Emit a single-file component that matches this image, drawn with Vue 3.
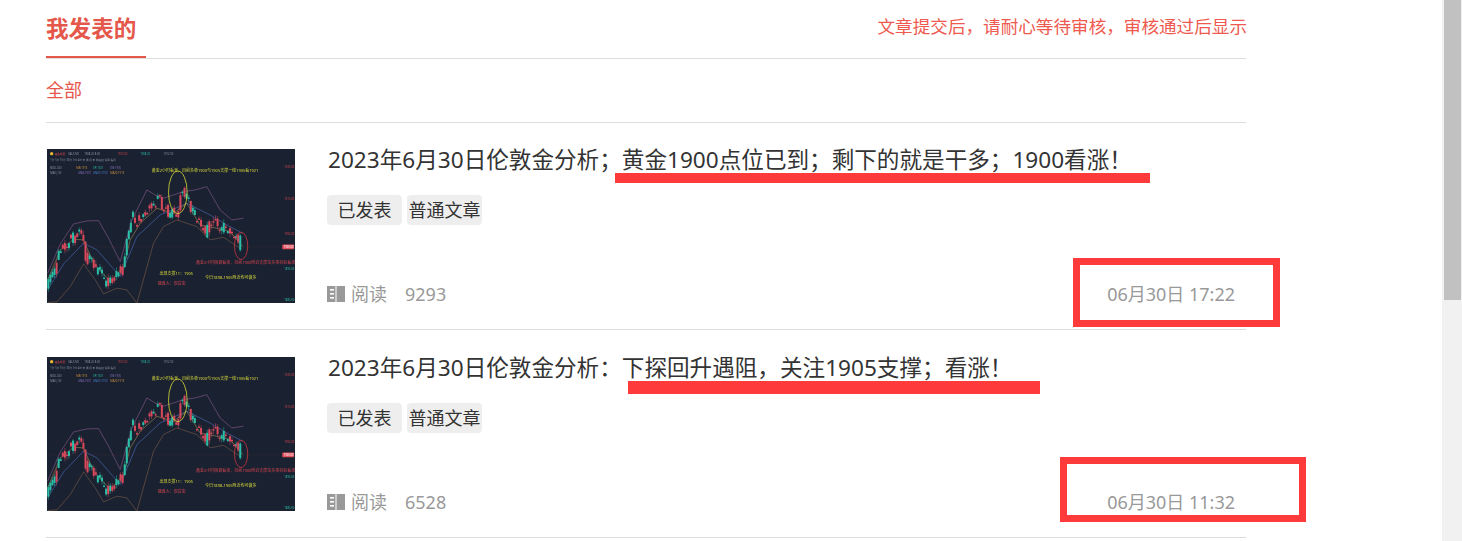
<script setup>
const articles = [
  { id: 1, title: '2023年6月30日伦敦金分析；黄金1900点位已到；剩下的就是干多；1900看涨！', reads: 9293, date: '06月30日 17:22' },
  { id: 2, title: '2023年6月30日伦敦金分析：下探回升遇阻，关注1905支撑；看涨！', reads: 6528, date: '06月30日 11:32' }
]

const pricePath = [[22,430],[40,395],[65,315],[90,300],[128,275],[136,360],[160,378],[190,415],[208,432],[225,395],[245,400],[258,320],[275,232],[300,250],[325,200],[355,175],[375,210],[410,225],[425,150],[445,185],[470,240],[495,275],[515,245],[540,260],[570,268],[605,322]]
const interp = (x) => {
  for (let i = 1; i < pricePath.length; i++) {
    const [x0, y0] = pricePath[i - 1]
    const [x1, y1] = pricePath[i]
    if (x <= x1) return y0 + ((y1 - y0) * (x - x0)) / (x1 - x0)
  }
  return pricePath[pricePath.length - 1][1]
}
let seed = 91
const rnd = () => {
  seed = (seed * 1103 + 12345) % 65536
  return seed / 65536
}
const candles = []
for (let x = 24; x <= 606; x += 6.2) {
  const a = interp(x - 6.2) + (rnd() - 0.5) * 38
  const b = interp(x) + (rnd() - 0.5) * 38
  const top = Math.min(a, b)
  const h = Math.max(Math.abs(a - b), 4)
  const up = rnd() < 0.62
  candles.push({ x, top, h, color: up ? '#d9495c' : '#2bbfa8', wickTop: top - rnd() * 12, wickBottom: top + h + rnd() * 12 })
}
const upper = '22,400 60,312 100,252 140,243 175,242 205,295 240,365 258,300 275,240 320,150 345,165 370,175 430,155 465,150 500,140 540,210 575,240 610,235'
const middle = '22,450 70,372 130,310 170,330 240,410 290,290 360,225 440,190 510,225 560,255 608,280'
const lower = '22,488 50,486 90,440 130,372 165,420 190,462 230,445 260,450 290,490 340,310 370,260 410,240 470,260 510,300 550,292 600,325'
const fast = '22,420 60,330 100,298 130,300 160,370 210,425 250,380 270,300 300,250 350,205 400,220 440,190 480,255 530,265 570,275 608,320'
</script>

<template>
  <div class="page">
    <main class="content">
      <header class="head">
        <h2 class="tab">我发表的</h2>
        <p class="notice">文章提交后，请耐心等待审核，审核通过后显示</p>
      </header>
      <div class="filter">全部</div>
      <article v-for="item in articles" :key="item.id" class="item">
        <svg class="thumb" viewBox="20 27 745 463" preserveAspectRatio="none">
          <rect x="20" y="27" width="745" height="463" fill="#1a2231" />
          <circle cx="34" cy="41" r="5" fill="#f1b92e" />
          <text x="43" y="44" class="tiny hot">黄金现货</text>
          <text x="84" y="44" class="tiny dim">XAUUSD</text>
          <text x="132" y="44" class="tiny dim">1908.20 8.30</text>
          <text x="232" y="44" class="tiny hot">1912.50</text>
          <text x="300" y="44" class="tiny teal">1908.20</text>
          <text x="370" y="44" class="tiny dim">1912.50</text>
          <text x="30" y="64" class="tiny dim">1分 5分 15分 30分 1时 4时 日 周 月 年 前复权 设置 指标</text>
          <text x="30" y="86" class="tiny dim">BOLL(20)</text>
          <text x="108" y="86" class="tiny org">MB:1913</text>
          <text x="158" y="86" class="tiny teal">UP:1921</text>
          <text x="210" y="86" class="tiny pur">DN:1905</text>
          <text x="30" y="102" class="tiny dim">MA(5,10)</text>
          <text x="115" y="102" class="tiny pur">MA5:1907</text>
          <text x="160" y="102" class="tiny blu">MA10:1910</text>
          <text x="210" y="102" class="tiny org">MA20:1913</text>
          <text x="733" y="84" class="tiny red">1925.00</text>
          <text x="733" y="181" class="tiny red">1915.00</text>
          <text x="733" y="286" class="tiny red">1905.00</text>
          <rect x="727" y="314" width="35" height="14" rx="2" fill="#e2505e" />
          <text x="731" y="325" class="tiny white">1900.00</text>
          <text x="733" y="389" class="tiny teal">1895.00</text>
          <text x="733" y="484" class="tiny teal">1885.00</text>
          <line x1="22" y1="321" x2="725" y2="321" stroke="#6b2f3c" stroke-width="1" stroke-dasharray="3 3" />
          <polyline :points="upper" class="band" stroke="#8a5a92" />
          <polyline :points="lower" class="band" stroke="#7a5a48" />
          <polyline :points="middle" class="band" stroke="#4b6fc0" stroke-width="2" />
          <polyline :points="fast" class="band" stroke="#9a8a50" />
          <g v-for="c in candles" :key="c.x">
            <line :x1="c.x" :x2="c.x" :y1="c.wickTop" :y2="c.wickBottom" :stroke="c.color" stroke-width="1.4" />
            <rect :x="c.x - 3" :y="c.top" width="6" :height="c.h" :fill="c.color" />
          </g>
          <ellipse cx="413" cy="157" rx="28" ry="64" class="ring" stroke="#d8d83a" />
          <ellipse cx="603" cy="318" rx="20" ry="41" class="ring" stroke="#c8353f" />
          <text x="335" y="95" class="note yel">黄金2小时看涨，目前多单1900与1905支撑一线1905看1921</text>
          <text x="468" y="372" class="note red">黄金2小时回调看涨，目前1900附近支撑位多单目标看涨</text>
          <text x="358" y="404" class="note yel">出现支撑11：1905</text>
          <text x="495" y="417" class="note yel">今日1898-1905附近均可做多</text>
          <text x="353" y="434" class="note red">操盘人：现货金</text>
        </svg>
        <div class="body">
          <h3 class="title">{{ item.title }}</h3>
          <div class="tags">
            <span class="tag">已发表</span>
            <span class="tag">普通文章</span>
          </div>
          <div class="meta">
            <span class="reads">
              <svg class="book" viewBox="0 0 18 16">
                <rect x="0" y="0" width="8" height="16" fill="#999" />
                <rect x="10" y="0" width="8" height="16" fill="#999" />
                <rect x="8" y="0" width="2" height="16" fill="#ccc" />
                <rect x="3" y="3" width="4" height="1.6" fill="#fff" />
                <rect x="3" y="7" width="4" height="1.6" fill="#fff" />
                <rect x="3" y="11" width="4" height="1.6" fill="#fff" />
              </svg>
              <span>阅读</span>
              <span class="count">{{ item.reads }}</span>
            </span>
            <time class="date">{{ item.date }}</time>
          </div>
        </div>
      </article>
    </main>
    <aside class="scrollbar"><div class="thumb-bar"></div></aside>
    <i class="mark line-one"></i>
    <i class="mark line-two"></i>
    <i class="frame frame-one"></i>
    <i class="frame frame-two"></i>
  </div>
</template>

<style>
html, body { margin: 0; overflow: hidden; background: #fff; }
</style>

<style scoped>
.page {
  position: relative;
  display: flex;
  height: 541px;
  overflow: hidden;
  background: #fff;
  color: #333;
  font-family: "Noto Sans", "Noto Sans CJK SC", sans-serif;
}
.content { width: 1200px; margin-left: 46px; }
.scrollbar {
  margin-left: auto;
  width: 17px;
  padding: 0 1px 0 2px;
  background: #f1f1f1;
}
.thumb-bar { height: 300px; background: #c1c1c1; }
.head {
  display: flex;
  justify-content: space-between;
  height: 58px;
  border-bottom: 1px solid #ddd;
}
.tab {
  width: 100px;
  height: 58px;
  margin: 0;
  border-bottom: 2px solid #e5574a;
  box-sizing: border-box;
  color: #e5574a;
  font-size: 22.6px;
  line-height: 57px;
  font-weight: 700;
}
.notice {
  margin: 0 -1px 0 0;
  color: #ee5a50;
  font-size: 17.6px;
  line-height: 53px;
}
.filter {
  height: 63px;
  line-height: 63px;
  border-bottom: 1px solid #ddd;
  color: #e5574a;
  font-size: 18px;
}
.item {
  display: flex;
  gap: 32px;
  padding: 26.2px 0 26px;
  border-bottom: 1px solid #ddd;
}
.thumb {
  flex: none;
  width: 248px;
  height: 154.2px;
  margin-left: 1px;
  filter: blur(0.35px);
}
.tiny { font-size: 8px; }
.note { font-size: 12px; }
.dim { fill: #8d94a3; }
.hot, .red { fill: #d9434f; }
.teal { fill: #2bb7a5; }
.org { fill: #c98a3c; }
.pur { fill: #8a6bb8; }
.blu { fill: #4b7bd0; }
.yel { fill: #d8d83a; }
.white { fill: #fff; }
.band { fill: none; stroke-width: 1.8; }
.ring { fill: none; stroke-width: 2.4; }
.body {
  flex: 1;
  display: flex;
  flex-direction: column;
  min-width: 0;
}
.title {
  margin: 0;
  padding-left: 1px;
  color: #333;
  font-size: 22.6px;
  line-height: 22px;
  font-weight: 400;
}
.tags { display: flex; gap: 5px; margin-top: 24px; }
.tag {
  width: 75px;
  height: 30px;
  border-radius: 4px;
  background: #eee;
  font-size: 18px;
  line-height: 30px;
  text-align: center;
  white-space: nowrap;
}
.meta {
  margin-top: auto;
  display: flex;
  justify-content: space-between;
  align-items: center;
  color: #999;
  font-size: 18px;
  line-height: 18px;
  padding-right: 11px;
}
.reads { display: flex; align-items: center; gap: 6px; }
.book { width: 18px; height: 16px; }
.count { margin-left: 12px; }
.mark, .frame { position: absolute; display: block; box-sizing: border-box; }
.mark { background: #ff3a3a; }
.line-one { left: 615px; top: 173px; width: 535px; height: 10px; }
.line-two { left: 628px; top: 381px; width: 412px; height: 13px; }
.frame { border: 7px solid #ff3a3a; }
.frame-one { left: 1073px; top: 258px; width: 207px; height: 69px; }
.frame-two { left: 1060px; top: 457px; width: 246px; height: 65px; }
</style>
